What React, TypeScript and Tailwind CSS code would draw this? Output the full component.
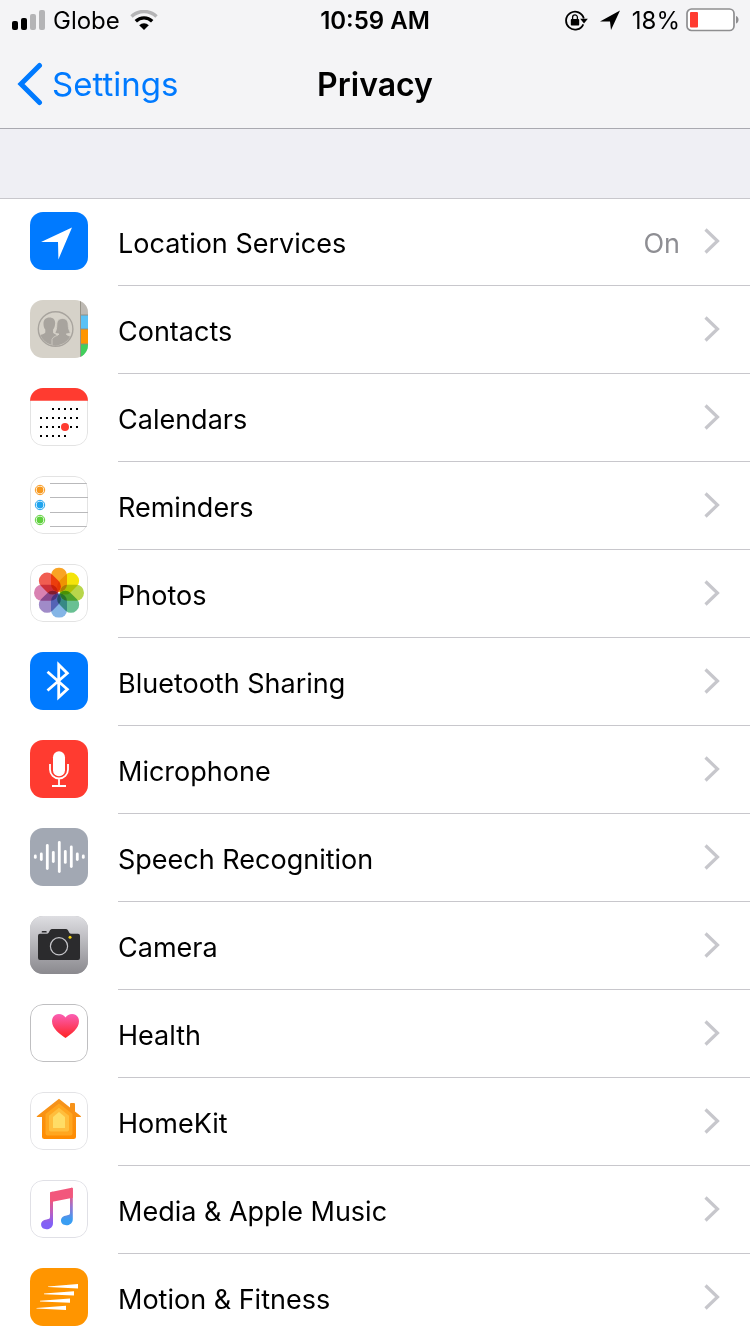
import React from 'react';

const CalendarDots: React.FC = () => {
  const rows = [
    { y: 21, from: 2, to: 6 },
    { y: 30, from: 0, to: 6 },
    { y: 39, from: 0, to: 6 },
    { y: 48, from: 0, to: 4 },
  ];
  return (
    <>
      {rows.map((row) =>
        [0, 1, 2, 3, 4, 5, 6]
          .filter((col) => col >= row.from && col <= row.to)
          .map((col) => (
            <rect key={`${row.y}-${col}`} x={10 + col * 6} y={row.y - 1} width="2" height="2" fill="#000" />
          ))
      )}
    </>
  );
};

const petals = ['#f9a01b', '#f4e300', '#b5d444', '#63bd8f', '#7fb2e5', '#9c86c6', '#d77cae', '#f0564a'];

const waveBars = [
  [5.3, 28, 29.4],
  [11.3, 26, 31.6],
  [17.3, 17.4, 40.6],
  [23.3, 24.4, 33.6],
  [29.3, 14.4, 43.6],
  [35.3, 23.4, 34.4],
  [41.3, 19, 38.6],
  [47.3, 26, 31.6],
  [53.3, 28, 29.4],
];

const LocationIcon = () => <path d="M11 30 42 15.6 28.4 47.4 28 30Z" fill="#fff" />;

const ContactsIcon = () => (
  <>
    <path d="M51 0h7v15h-7z" fill="#bdb9b3" />
    <path d="M51 15h7v14h-7z" fill="#5ac1f5" />
    <path d="M51 29h7v15h-7z" fill="#ff9500" />
    <path d="M51 44h7v14h-7z" fill="#41cf5c" />
    <path d="M50.5 0v58M51 15h7M51 29h7M51 44h7" stroke="#8f8b80" strokeWidth="0.9" />
    <clipPath id="contacts-clip">
      <circle cx="25.6" cy="29" r="16.4" />
    </clipPath>
    <g clipPath="url(#contacts-clip)" fill="#a8a49e">
      <path d="M19.5 17.5c4 0 6 2.6 5.6 6.5-.2 3-1.2 4.5-2 5.6v3.2c1 1.5 5.4 2 5.9 6V48H6V36.5c2.5-1.5 8-2 9.3-4v-3c-1.2-1.4-1.7-3-1.8-5.5-.2-4 2-6.5 6-6.5Z" />
      <path
        d="M32.5 18.5c4.3 0 5.6 3 5.7 6.5.1 3.5.8 5.5 2.2 7.5-1.5 1-3 1.4-4.2 1.5 1 2 5 2 8.3 4V48H22v-8.500c.7-3.5 6.3-3.5 7-5.5-1.5-.1-3-.5-4-1.5 1.4-2 1.7-4 1.8-7.5.1-3.6 1.5-6.500 5.7-6.500Z"
        stroke="#d6d2c9"
        strokeWidth="0.8"
      />
    </g>
    <circle cx="25.6" cy="29" r="17.3" fill="none" stroke="#a8a49e" strokeWidth="1.4" />
  </>
);

const CalendarIcon = () => (
  <>
    <path d="M0 0h58v12.7H0z" fill="#ff3b30" />
    <CalendarDots />
    <circle cx="35" cy="39" r="4" fill="#ff3b30" />
  </>
);

const RemindersIcon = () => (
  <>
    {[
      { y: 14, color: '#f7981d' },
      { y: 29, color: '#1fa4ee' },
      { y: 44, color: '#5fd03d' },
    ].map((dot) => (
      <g key={dot.y}>
        <circle cx="10" cy={dot.y} r="4.7" fill="none" stroke={dot.color} strokeWidth="1" />
        <circle cx="10" cy={dot.y} r="3.4" fill={dot.color} />
      </g>
    ))}
    <path d="M20 7.5h38M20 21.5h38M20 36.5h38M20 50.5h38" stroke="#b9b9bb" strokeWidth="1" />
  </>
);

const PhotosIcon = () => (
  <g className="isolate">
    {petals.map((color, i) => (
      <rect
        key={color}
        className="mix-blend-multiply"
        x="21"
        y="3.8"
        width="16"
        height="24"
        rx="7.5"
        fill={color}
        fillOpacity="0.96"
        transform={`rotate(${i * 45} 29 28.7)`}
      />
    ))}
  </g>
);

const BluetoothIcon = () => (
  <path d="M17.5 19.8 37.3 37.3 28.7 45.3V12.7l8.6 8.5L17.5 38.5" fill="none" stroke="#fff" strokeWidth="2.8" />
);

const MicrophoneIcon = () => (
  <>
    <rect x="23" y="11.3" width="12" height="25" rx="6" fill="#fff" />
    <path d="M20 24v5.5a9 9 0 0 0 18 0V24M29 38.5V46M22 46h14" fill="none" stroke="#fff" strokeWidth="1.8" />
  </>
);

const SpeechIcon = () => (
  <>
    {waveBars.map(([x, top, bottom]) => (
      <path key={x} d={`M${x} ${top}V${bottom}`} stroke="#fff" strokeWidth="2.8" strokeLinecap="round" />
    ))}
  </>
);

const CameraIcon = () => (
  <>
    <linearGradient id="camera-bg" x1="0" y1="0" x2="0" y2="1">
      <stop offset="0" stopColor="#dedee2" />
      <stop offset="1" stopColor="#8a898e" />
    </linearGradient>
    <path d="M0 0h58v58H0z" fill="url(#camera-bg)" />
    <path
      d="M12.5 15h3.5q.7 0 .7.7v.8h-5v-.8q0-.7.8-.7ZM10 17.7h7c2.5 0 2.3-4.7 5-4.7h14c2.7 0 2.5 4.7 5 4.7h7q2 0 2 2V42q0 2-2 2H10q-2 0-2-2V19.7q0-2 2-2Z"
      fill="#2b2b2d"
    />
    <circle cx="29" cy="30.3" r="8.6" fill="none" stroke="#c4c4c8" strokeWidth="1.2" />
    <circle cx="40" cy="21.3" r="1.5" fill="#f5d313" />
  </>
);

const HealthIcon = () => (
  <>
    <linearGradient id="heart" x1="0" y1="0" x2="0" y2="1">
      <stop offset="0" stopColor="#fa5fb4" />
      <stop offset="1" stopColor="#ff2323" />
    </linearGradient>
    <path
      d="M35.5 34C30 30.3 22 24.5 22 17.3 22 13 25 10 29 10c2.8 0 5 1.3 6.5 3.6C37 11.3 39.2 10 42 10c4 0 7 3 7 7.3C49 24.5 41 30.3 35.5 34Z"
      fill="url(#heart)"
    />
  </>
);

const HomeIcon = () => (
  <>
    <linearGradient id="roof" x1="0" y1="0" x2="0" y2="1">
      <stop offset="0" stopColor="#f5941f" />
      <stop offset="1" stopColor="#ff8c00" />
    </linearGradient>
    <path
      d="M29 6.8 40 15.5V12q0-1 1-1h3q1 0 1 1v7.5l5.7 4.5c.6.6.3 1-.4 1H46v19.5q0 2.5-2.5 2.5h-29Q12 47 12 44.5V25H7.5c-.8 0-1-.5-.4-1Z"
      fill="url(#roof)"
    />
    <path d="M29 11.5 42.5 22v19.5q0 2-2 2h-23q-2 0-2-2V22Z" fill="#ffa61f" />
    <path d="M29 15.8 39 23.8v14q0 1.7-1.7 1.7H20.7q-1.7 0-1.7-1.7v-14Z" fill="#ffbe3d" />
    <path d="M29 20 35 25v11H23V25Z" fill="#ffdd66" />
  </>
);

const MusicIcon = () => (
  <>
    <linearGradient id="note-left" x1="0" y1="0" x2="0" y2="1">
      <stop offset="0.2" stopColor="#f2577c" />
      <stop offset="0.55" stopColor="#bb5fc0" />
      <stop offset="0.85" stopColor="#8260f6" />
    </linearGradient>
    <linearGradient id="note-right" x1="0" y1="0" x2="0" y2="1">
      <stop offset="0.15" stopColor="#f2577c" />
      <stop offset="0.5" stopColor="#9a74cf" />
      <stop offset="0.85" stopColor="#3a9df2" />
    </linearGradient>
    <path
      d="M20 13.3q0-1 1-1.2l2-.4V43c0 4-3 6.3-6.6 6.3-3 0-5.3-1.8-5.3-4.7 0-3.2 2.4-4.800 5.5-5.2 2.400-.4 3.400-.6 3.400-2.600Z"
      fill="url(#note-left)"
    />
    <path
      d="M40 8.2l1.7-.4q1.100-.2 1.100.9V39c0 4-3 6.300-6.500 6.300-3 0-5.300-1.800-5.300-4.700 0-3.200 2.400-4.800 5.500-5.200 2.500-.4 3.500-.6 3.500-2.600Z"
      fill="url(#note-right)"
    />
    <path d="M20 13.3q0-1 1-1.2L41.7 7.8q1.1-.2 1.1.9v9L20 22.3Z" fill="#f2577c" />
  </>
);

const MotionIcon = () => (
  <path
    d="M18 18.4 48 16v4.4L18 19ZM14 25.6 44 23.3v4.3L14 26.2ZM10 32.8 40 30.5v4.3L10 33.4ZM6.5 40 36 37.7V42L6.5 40.6Z"
    fill="#fff"
  />
);

interface Item {
  label: string;
  icon: React.FC;
  tile: string;
  value?: string;
  outline?: string;
}

const items: Item[] = [
  { label: 'Location Services', icon: LocationIcon, tile: 'bg-[#007aff]', value: 'On' },
  { label: 'Contacts', icon: ContactsIcon, tile: 'bg-[#d6d2c9]' },
  { label: 'Calendars', icon: CalendarIcon, tile: 'bg-white', outline: '#e3e3e3' },
  { label: 'Reminders', icon: RemindersIcon, tile: 'bg-white', outline: '#e3e3e3' },
  { label: 'Photos', icon: PhotosIcon, tile: 'bg-white', outline: '#e3e3e3' },
  { label: 'Bluetooth Sharing', icon: BluetoothIcon, tile: 'bg-[#007aff]' },
  { label: 'Microphone', icon: MicrophoneIcon, tile: 'bg-[#ff3b30]' },
  { label: 'Speech Recognition', icon: SpeechIcon, tile: 'bg-[#a2a8b3]' },
  { label: 'Camera', icon: CameraIcon, tile: 'bg-[#b4b4b8]' },
  { label: 'Health', icon: HealthIcon, tile: 'bg-white', outline: '#bfbfc1' },
  { label: 'HomeKit', icon: HomeIcon, tile: 'bg-white', outline: '#e3e3e6' },
  { label: 'Media & Apple Music', icon: MusicIcon, tile: 'bg-white', outline: '#e0e0e6' },
  { label: 'Motion & Fitness', icon: MotionIcon, tile: 'bg-[#ff9500]' },
];

const StatusBar: React.FC = () => (
  <div className="grid h-10 grid-cols-[1fr_auto_1fr] items-center px-3 text-2xl">
    <div className="flex items-center gap-2">
      <svg width="33" height="20" viewBox="0 0 33 20">
        <rect x="0" y="11" width="6" height="9" rx="2" fill="#000" />
        <rect x="9" y="8" width="6" height="12" rx="2" fill="#000" />
        <rect x="18" y="4" width="6" height="16" rx="2" fill="#b4b4b6" />
        <rect x="27" y="0" width="6" height="20" rx="2" fill="#b4b4b6" />
      </svg>
      <span className="pt-0.5">Globe</span>
      <svg className="ml-0.5" width="28" height="20" viewBox="0 0 28 20">
        <path d="M1.5 6.5a18 18 0 0 1 25 0" fill="none" stroke="#b4b4b6" strokeWidth="3.4" />
        <path d="M5.8 11.2a11.8 11.8 0 0 1 16.4 0" fill="none" stroke="#000" strokeWidth="3.4" />
        <path d="M14 20 9.2 15.2a7 7 0 0 1 9.6 0Z" fill="#000" />
      </svg>
    </div>
    <span className="pt-0.5 font-semibold">10:59 AM</span>
    <div className="flex items-center justify-end">
      <svg width="23" height="21" viewBox="0 0 23 21">
        <path d="M18.3 14.3A9 9 0 1 1 18.8 8.5" fill="none" stroke="#000" strokeWidth="1.8" />
        <path d="M15.2 8.8h7.6L19 13.6Z" fill="#000" />
        <rect x="5.8" y="9" width="8.4" height="6.5" rx="0.9" fill="#000" />
        <path d="M7.6 9.5V7.3a2.4 2.4 0 0 1 4.8 0v2.2" fill="none" stroke="#000" strokeWidth="1.3" />
      </svg>
      <svg className="ml-3" width="20" height="20" viewBox="0 0 20 20">
        <path d="M0 11.5 20 .5 11 20 10 11.5Z" fill="#000" />
      </svg>
      <span className="pt-0.5 pl-3">18%</span>
      <svg className="-mr-px ml-1.5" width="53" height="24" viewBox="0 0 53 24">
        <rect x="1" y="1" width="47" height="21.5" rx="4.5" fill="#fff" stroke="#8e8e90" strokeWidth="1.7" />
        <rect x="4" y="4" width="8" height="15.5" rx="1" fill="#ff3b30" />
        <path d="M50 8c3.4 1 3.4 6.5 0 7.5Z" fill="#8e8e90" />
      </svg>
    </div>
  </div>
);

const NavBar: React.FC = () => (
  <div className="grid h-22 grid-cols-[1fr_auto_1fr] items-center px-4">
    <a href="#settings" className="flex items-center gap-2 justify-self-start text-[33px] text-[#007aff]">
      <svg width="28" height="44" viewBox="0 0 28 44">
        <path d="M23.5 3.5 5 22l18.5 18.5" fill="none" stroke="currentColor" strokeWidth="5" strokeLinecap="round" />
      </svg>
      <span className="pt-0.5">Settings</span>
    </a>
    <h1 className="pt-0.5 text-[32px] font-semibold">Privacy</h1>
  </div>
);

const Row: React.FC<{ item: Item }> = ({ item }) => {
  const Icon = item.icon;
  return (
    <li>
      <a href="#" className="flex items-center gap-[30px] pl-[30px]">
        <span className={`mb-0.5 block size-[58px] shrink-0 overflow-hidden rounded-[13px] ${item.tile}`}>
          <svg className="block size-full" viewBox="0 0 58 58">
            {item.outline && (
              <rect x="0.5" y="0.5" width="57" height="57" rx="12.5" fill="none" stroke={item.outline} />
            )}
            <Icon />
          </svg>
        </span>
        <span className="flex h-22 flex-1 items-center border-b border-[#c8c7cc] pr-[30px] text-[27px]">
          <span className="flex-1 pt-1.5">{item.label}</span>
          {item.value && <span className="pt-1.5 pr-6 text-[#8e8e93]">{item.value}</span>}
          <svg className="mb-0.5" width="16" height="26" viewBox="0 0 16 26">
            <path d="M1.5 1.5 13.5 13 1.5 24.5" fill="none" stroke="#c7c7cc" strokeWidth="3.2" />
          </svg>
        </span>
      </a>
    </li>
  );
};

export default function App() {
  return (
    <div className="flex h-screen flex-col bg-[#efeff4] font-[Inter,sans-serif] text-black">
      <header className="shrink-0 border-b border-[#a9a9b0] bg-[#f4f4f6]">
        <StatusBar />
        <NavBar />
      </header>
      <main className="min-h-0 flex-1 overflow-y-auto pt-[69px] [scrollbar-width:none]">
        <ul className="bg-white shadow-[inset_0_1px_0_#c8c7cc]">
          {items.map((item) => (
            <Row key={item.label} item={item} />
          ))}
        </ul>
      </main>
    </div>
  );
}
